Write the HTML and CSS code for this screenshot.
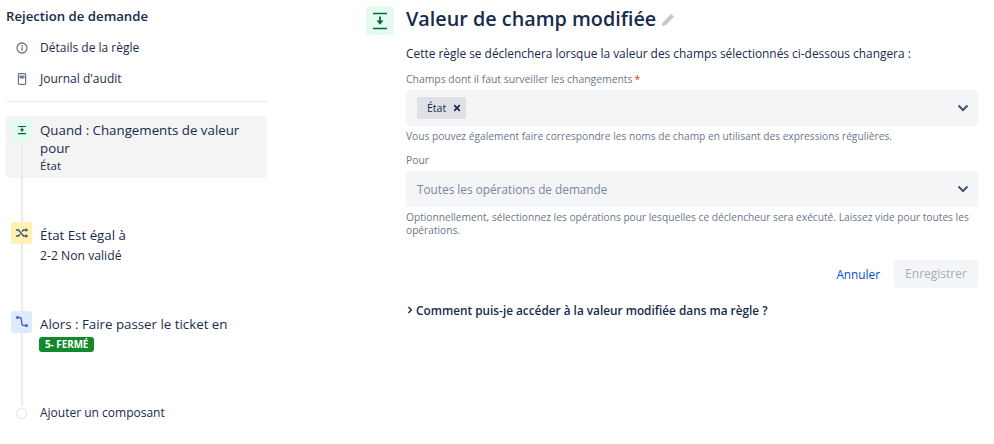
FILE: index.html
```html
<!DOCTYPE html>
<html lang="fr">
<head>
    <meta charset="UTF-8">
    <title>Rejection de demande</title>
    <link rel="stylesheet" href="styles.css">
</head>
<body>
    <div class="page">
        <aside class="sidebar">
            <h2 class="rule-name">Rejection de demande</h2>
            <div class="nav-item">
                <svg class="nav-icon" width="12" height="12" viewBox="0 0 12 12"><circle cx="6" cy="6" r="5" fill="none" stroke="#6b778c" stroke-width="1.3"/><rect x="5.3" y="5.2" width="1.4" height="3.4" fill="#6b778c"/><rect x="5.3" y="3" width="1.4" height="1.4" fill="#6b778c"/></svg>
                <span>Détails de la règle</span>
            </div>
            <div class="nav-item">
                <svg class="nav-icon" width="12" height="12" viewBox="0 0 12 12"><rect x="2.4" y="0.7" width="7.2" height="10.6" rx="0.8" fill="none" stroke="#6b778c" stroke-width="1.2"/><rect x="3.5" y="2.6" width="5" height="2.8" fill="#6b778c"/></svg>
                <span>Journal d'audit</span>
            </div>
            <hr class="divider">
            <div class="timeline">
                <div class="step step-active">
                    <span class="step-icon icon-green">
                        <svg width="12" height="12" viewBox="0 0 12 12"><path d="M2 1.5h8M2 8.6h8" stroke="#006644" stroke-width="1.2"/><path d="M6 2.5v2.2" stroke="#006644" stroke-width="1.2"/><path d="M3.8 4.2h4.4L6 7z" fill="#006644"/></svg>
                    </span>
                    <div class="step-text">
                        <div class="step-title">Quand : Changements de valeur pour</div>
                        <div class="step-field">État</div>
                    </div>
                </div>
                <div class="step step-cond">
                    <span class="step-icon icon-yellow">
                        <svg width="14" height="12" viewBox="0 0 14 12"><path d="M1 3h2.5l5 6H12M1 9h2.5l1.5-1.8M7 4.6L8.5 3H12" fill="none" stroke="#42526e" stroke-width="1.4"/><path d="M10.8 1l2.4 2-2.4 2zM10.8 7l2.4 2-2.4 2z" fill="#42526e"/></svg>
                    </span>
                    <div class="step-text">
                        <div class="step-title">État Est égal à</div>
                        <div class="step-sub">2-2 Non validé</div>
                    </div>
                </div>
                <div class="step step-action">
                    <span class="step-icon icon-blue">
                        <svg width="14" height="14" viewBox="0 0 14 14"><path d="M2.5 2.5h2.2c1 0 1.5.6 1.6 1.5l.6 5c.1 1 .6 1.6 1.6 1.6h2.8" fill="none" stroke="#4a6fb5" stroke-width="1.5"/><circle cx="2.5" cy="2.5" r="1.6" fill="#4a6fb5"/><circle cx="11.5" cy="10.6" r="1.6" fill="#4a6fb5"/></svg>
                    </span>
                    <div class="step-text">
                        <div class="step-title">Alors : Faire passer le ticket en</div>
                        <span class="status-badge">5- FERMÉ</span>
                    </div>
                </div>
                <div class="step step-add">
                    <span class="add-dot"></span>
                    <div class="step-text">Ajouter un composant</div>
                </div>
            </div>
        </aside>

        <main class="content">
            <span class="header-icon">
                <svg width="22" height="22" viewBox="0 0 22 22"><path d="M4 3.5h14M4 18.5h14" stroke="#006644" stroke-width="1.7"/><path d="M11 6.5v5" stroke="#006644" stroke-width="1.8"/><path d="M7.5 10.5h7L11 14.8z" fill="#006644"/></svg>
            </span>
            <div class="panel">
                <h1 class="panel-title">
                    Valeur de champ modifiée
                    <svg width="14" height="14" viewBox="0 0 14 14"><path d="M1 13l.8-3.6L9.6 1.6a1 1 0 0 1 1.4 0l1.4 1.4a1 1 0 0 1 0 1.4L4.6 12.2z" fill="#c1c7d0"/></svg>
                </h1>
                <p class="intro">Cette règle se déclenchera lorsque la valeur des champs sélectionnés ci-dessous changera :</p>

                <label class="field-label">Champs dont il faut surveiller les changements<span class="required">*</span></label>
                <div class="select-box">
                    <span class="tag">État
                        <svg width="8" height="8" viewBox="0 0 8 8"><path d="M1.2 1.2l5.6 5.6M6.8 1.2L1.2 6.8" stroke="#172b4d" stroke-width="1.7"/></svg>
                    </span>
                    <svg class="chevron" width="14" height="14" viewBox="0 0 14 14"><path d="M2.5 4.5L7 9l4.5-4.5" fill="none" stroke="#42526e" stroke-width="2"/></svg>
                </div>
                <p class="help">Vous pouvez également faire correspondre les noms de champ en utilisant des expressions régulières.</p>

                <label class="field-label label-pour">Pour</label>
                <div class="select-box">
                    <span class="placeholder">Toutes les opérations de demande</span>
                    <svg class="chevron" width="14" height="14" viewBox="0 0 14 14"><path d="M2.5 4.5L7 9l4.5-4.5" fill="none" stroke="#42526e" stroke-width="2"/></svg>
                </div>
                <p class="help">Optionnellement, sélectionnez les opérations pour lesquelles ce déclencheur sera exécuté. Laissez vide pour toutes les opérations.</p>

                <div class="actions">
                    <a class="cancel">Annuler</a>
                    <button class="save" type="button" disabled>Enregistrer</button>
                </div>

                <div class="faq">
                    <svg width="8" height="8" viewBox="0 0 8 8"><path d="M2.5 1l2.8 3-2.8 3" fill="none" stroke="#172b4d" stroke-width="1.4"/></svg>
                    <span>Comment puis-je accéder à la valeur modifiée dans ma règle ?</span>
                </div>
            </div>
        </main>
    </div>
</body>
</html>
```

FILE: styles.css
```css
body {
    margin: 0;
    font-family: "Open Sans", "Noto Sans", sans-serif;
    font-size: 13px;
    color: #172b4d;
    background-color: #fff;
    overflow: hidden;
}

.page {
    display: flex;
    height: 444px;
}

.sidebar {
    width: 261px;
    margin-left: 6px;
    flex-shrink: 0;
}

.rule-name {
    margin: 7px 0 0;
    font-size: 13.2px;
    line-height: 18px;
    font-weight: 600;
}

.nav-item {
    display: flex;
    align-items: center;
    height: 31px;
    padding-left: 10px;
    gap: 12px;
    font-size: 12px;
}

.nav-item:first-of-type {
    margin-top: 7px;
}

.divider {
    margin: 7px 0 14px;
    border: none;
    border-top: 1px solid #ebecf0;
}

.timeline {
    position: relative;
}

/* sits above the card background, below the icons */
.timeline::before {
    content: "";
    position: absolute;
    left: 15px;
    top: 20px;
    width: 2px;
    height: 270px;
    background-color: #ebecf0;
}

.step {
    display: flex;
    gap: 8px;
    padding-left: 5px;
    font-size: 13.3px;
}

.step-active {
    background-color: #f4f4f4;
    border-radius: 4px;
    height: 62px;
    padding-top: 4px;
    box-sizing: border-box;
}

.step-cond {
    margin-top: 44px;
}

.step-action {
    margin-top: 46px;
}

.step-add {
    margin-top: 52px;
    align-items: center;
    font-size: 12px;
}

.step-icon {
    position: relative;
    flex-shrink: 0;
    display: flex;
    align-items: center;
    justify-content: center;
    width: 21px;
    height: 22px;
    border-radius: 3px;
}

.icon-green { background-color: #e3fcef; }
.icon-yellow { background-color: #fff0b3; }
.icon-blue { background-color: #deebff; }

.step-text {
    line-height: 18px;
    padding-top: 1px;
}

.step-active .step-text {
    padding-top: 1px;
    width: 215px;
}

.step-field {
    font-size: 11.5px;
    line-height: 17px;
}

.step-cond .step-title,
.step-action .step-title {
    padding-top: 3px;
}

.step-sub {
    margin-top: 3px;
    font-size: 12.2px;
}

.status-badge {
    display: inline-block;
    margin-top: 4px;
    margin-left: -1px;
    padding: 0 6px;
    height: 15px;
    line-height: 15px;
    background-color: #14892c;
    color: #fff;
    font-size: 9.8px;
    font-weight: 700;
    border-radius: 3px;
    vertical-align: top;
}

.add-dot {
    position: relative;
    width: 9px;
    height: 9px;
    margin: 0 5px;
    flex-shrink: 0;
    background-color: #fff;
    border: 1px solid #dfe1e6;
    border-radius: 50%;
}

.step-add .step-text {
    padding-top: 0;
}

.content {
    display: flex;
    margin-left: 99px;
    padding-top: 6px;
}

.header-icon {
    display: flex;
    align-items: center;
    justify-content: center;
    width: 28px;
    height: 29px;
    background-color: #e3fcef;
    border-radius: 3px;
    flex-shrink: 0;
}

.panel {
    width: 572px;
    margin-left: 12px;
}

.panel-title {
    margin: 0;
    font-size: 19.8px;
    line-height: 26px;
    font-weight: 600;
}

.panel-title svg {
    vertical-align: -1px;
}

.intro {
    margin: 12px 0 0;
    line-height: 18px;
    font-size: 11.9px;
}

.field-label {
    display: block;
    margin-top: 9px;
    font-size: 10.4px;
    line-height: 16px;
    font-weight: 500;
    color: #6b778c;
}

.label-pour {
    margin-top: 8px;
}

.required {
    color: #de350b;
    margin-left: 2px;
}

.select-box {
    display: flex;
    align-items: center;
    justify-content: space-between;
    height: 36px;
    margin-top: 3px;
    padding: 0 8px 0 11px;
    background-color: #f4f5f7;
    border-radius: 3px;
}

.tag {
    display: flex;
    align-items: center;
    gap: 7px;
    height: 22px;
    padding: 0 5px 0 10px;
    background-color: #dfe1e6;
    border-radius: 2px;
    font-size: 10.5px;
}

.placeholder {
    color: #7a869a;
    font-size: 11.8px;
}

.help {
    margin: 4px 0 0;
    font-size: 10.2px;
    line-height: 13.5px;
    color: #6b778c;
}

.actions {
    display: flex;
    justify-content: flex-end;
    align-items: center;
    gap: 14px;
    margin-top: 22px;
}

.cancel {
    color: #0052cc;
    font-size: 11.8px;
}

.save {
    width: 84px;
    height: 28px;
    border: none;
    border-radius: 3px;
    background-color: #f4f5f7;
    color: #a5adba;
    font-family: inherit;
    font-size: 12px;
}

.faq {
    display: flex;
    align-items: center;
    gap: 2px;
    margin-top: 13px;
    font-size: 11.8px;
    font-weight: 600;
    line-height: 18px;
}
```
